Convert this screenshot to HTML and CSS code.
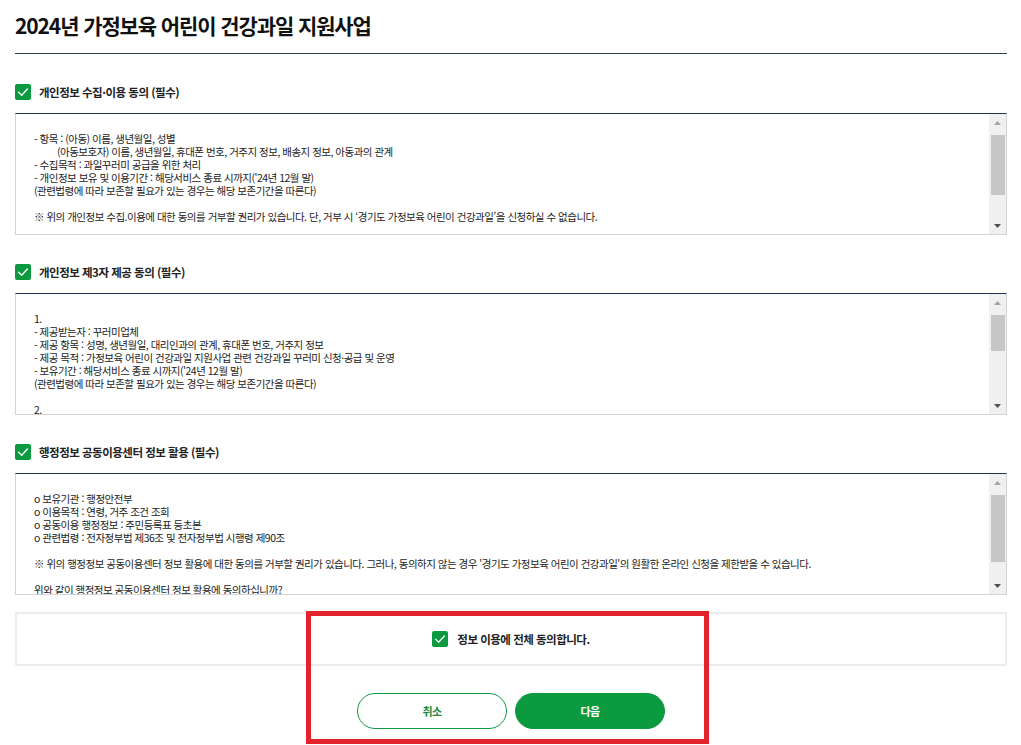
FILE: index.html
```html
<!DOCTYPE html>
<html lang="ko">
<head>
<meta charset="utf-8">
<title>2024년 가정보육 어린이 건강과일 지원사업</title>
<link rel="stylesheet" href="styles.css">
</head>
<body>
<div class="page">
  <h1 class="title">2024년 가정보육 어린이 건강과일 지원사업</h1>

  <section class="agree">
    <div class="agree-head">
      <span class="chk"><svg viewBox="0 0 16 16" width="16" height="16"><path d="M3.6 8.3 L6.7 11.2 L12.4 5.1" fill="none" stroke="#fff" stroke-width="1.4" stroke-linecap="round" stroke-linejoin="round"/></svg></span>
      <span class="agree-label">개인정보 수집·이용 동의 (필수)</span>
    </div>
    <div class="terms">
      <div class="terms-body">
        <p>- 항목 : (아동) 이름, 생년월일, 성별</p>
        <p class="indent">(아동보호자) 이름, 생년월일, 휴대폰 번호, 거주지 정보, 배송지 정보, 아동과의 관계</p>
        <p>- 수집목적 : 과일꾸러미 공급을 위한 처리</p>
        <p>- 개인정보 보유 및 이용기간 : 해당서비스 종료 시까지('24년 12월 말)</p>
        <p>(관련법령에 따라 보존할 필요가 있는 경우는 해당 보존기간을 따른다)</p>
        <p></p>
        <p>※ 위의 개인정보 수집.이용에 대한 동의를 거부할 권리가 있습니다. 단, 거부 시 ‘경기도 가정보육 어린이 건강과일’을 신청하실 수 없습니다.</p>
        <p></p>
        <p></p>
      </div>
      <div class="sbar">
        <span class="sb-btn"><svg width="7" height="4" viewBox="0 0 7 4"><polygon points="0,4 3.5,0 7,4" fill="#a3a3a3"/></svg></span>
        <span class="sb-track"><span class="sb-thumb thumb-1"></span></span>
        <span class="sb-btn"><svg width="7" height="4" viewBox="0 0 7 4"><polygon points="0,0 7,0 3.5,4" fill="#505050"/></svg></span>
      </div>
    </div>
  </section>

  <section class="agree">
    <div class="agree-head">
      <span class="chk"><svg viewBox="0 0 16 16" width="16" height="16"><path d="M3.6 8.3 L6.7 11.2 L12.4 5.1" fill="none" stroke="#fff" stroke-width="1.4" stroke-linecap="round" stroke-linejoin="round"/></svg></span>
      <span class="agree-label">개인정보 제3자 제공 동의 (필수)</span>
    </div>
    <div class="terms">
      <div class="terms-body">
        <p>1.</p>
        <p>- 제공받는자 : 꾸러미업체</p>
        <p>- 제공 항목 : 성명, 생년월일, 대리인과의 관계, 휴대폰 번호, 거주지 정보</p>
        <p>- 제공 목적 : 가정보육 어린이 건강과일 지원사업 관련 건강과일 꾸러미 신청·공급 및 운영</p>
        <p>- 보유기간 : 해당서비스 종료 시까지('24년 12월 말)</p>
        <p>(관련법령에 따라 보존할 필요가 있는 경우는 해당 보존기간을 따른다)</p>
        <p></p>
        <p>2.</p>
      </div>
      <div class="sbar">
        <span class="sb-btn"><svg width="7" height="4" viewBox="0 0 7 4"><polygon points="0,4 3.5,0 7,4" fill="#a3a3a3"/></svg></span>
        <span class="sb-track"><span class="sb-thumb thumb-2"></span></span>
        <span class="sb-btn"><svg width="7" height="4" viewBox="0 0 7 4"><polygon points="0,0 7,0 3.5,4" fill="#505050"/></svg></span>
      </div>
    </div>
  </section>

  <section class="agree">
    <div class="agree-head">
      <span class="chk"><svg viewBox="0 0 16 16" width="16" height="16"><path d="M3.6 8.3 L6.7 11.2 L12.4 5.1" fill="none" stroke="#fff" stroke-width="1.4" stroke-linecap="round" stroke-linejoin="round"/></svg></span>
      <span class="agree-label">행정정보 공동이용센터 정보 활용 (필수)</span>
    </div>
    <div class="terms">
      <div class="terms-body">
        <p>o 보유기관 : 행정안전부</p>
        <p>o 이용목적 : 연령, 거주 조건 조회</p>
        <p>o 공동이용 행정정보 : 주민등록표 등초본</p>
        <p>o 관련법령 : 전자정부법 제36조 및 전자정부법 시행령 제90조</p>
        <p></p>
        <p>※ 위의 행정정보 공동이용센터 정보 활용에 대한 동의를 거부할 권리가 있습니다. 그러나, 동의하지 않는 경우 '경기도 가정보육 어린이 건강과일'의 원활한 온라인 신청을 제한받을 수 있습니다.</p>
        <p></p>
        <p>위와 같이 행정정보 공동이용센터 정보 활용에 동의하십니까?</p>
      </div>
      <div class="sbar">
        <span class="sb-btn"><svg width="7" height="4" viewBox="0 0 7 4"><polygon points="0,4 3.5,0 7,4" fill="#a3a3a3"/></svg></span>
        <span class="sb-track"><span class="sb-thumb thumb-3"></span></span>
        <span class="sb-btn"><svg width="7" height="4" viewBox="0 0 7 4"><polygon points="0,0 7,0 3.5,4" fill="#505050"/></svg></span>
      </div>
    </div>
  </section>

  <div class="all-agree">
    <span class="chk"><svg viewBox="0 0 16 16" width="16" height="16"><path d="M3.6 8.3 L6.7 11.2 L12.4 5.1" fill="none" stroke="#fff" stroke-width="1.4" stroke-linecap="round" stroke-linejoin="round"/></svg></span>
    <span class="all-label">정보 이용에 전체 동의합니다.</span>
  </div>

  <div class="btns">
    <button class="btn btn-cancel" type="button">취소</button>
    <button class="btn btn-next" type="button">다음</button>
  </div>

  <div class="highlight"></div>
</div>
</body>
</html>
```

FILE: styles.css
```css
* { box-sizing: border-box; }

html, body {
  margin: 0;
  padding: 0;
  background: #fff;
}

body {
  font-family: "Noto Sans CJK KR", "Noto Sans", sans-serif;
  color: #333;
}

.page {
  position: relative;
  display: flex;
  flex-direction: column;
  padding: 0 14px 16px 15px;
}

.title {
  margin: 0;
  padding: 10px 0 13px;
  font-size: 21px;
  line-height: 30px;
  font-weight: 700;
  letter-spacing: -1.1px;
  color: #111;
  border-bottom: 1px solid #2c3e50;
}

.agree {
  display: flex;
  flex-direction: column;
  gap: 13px;
  margin-top: 30px;
}

.agree + .agree {
  margin-top: 29px;
}

.agree-head {
  display: flex;
  align-items: center;
  gap: 8px;
  height: 16px;
}

.chk {
  width: 16px;
  height: 16px;
  flex: none;
  border-radius: 2px;
  background: #0b9a40;
  display: flex;
  align-items: center;
  justify-content: center;
}

.agree-label {
  font-size: 11.5px;
  line-height: 16px;
  font-weight: 700;
  letter-spacing: -0.5px;
  color: #222;
}

.terms {
  display: flex;
  height: 122px;
  border: 1px solid #d3d3d3;
  border-top-color: #1e3550;
}

.terms-body {
  flex: 1;
  overflow: hidden;
  padding: 18px 18px 0;
  font-size: 10.5px;
  line-height: 13px;
  letter-spacing: -0.5px;
  color: #222;
}

.terms-body p {
  margin: 0;
  height: 13px;
  white-space: nowrap;
}

.terms-body .indent {
  padding-left: 23px;
}

.sbar {
  width: 17px;
  flex: none;
  display: flex;
  flex-direction: column;
  background: #f0f0f0;
}

.sb-btn {
  height: 17px;
  flex: none;
  display: flex;
  align-items: center;
  justify-content: center;
}

.sb-track {
  flex: 1;
  display: flex;
  flex-direction: column;
  padding: 4px 1px 0 2px;
}

.sb-thumb {
  display: block;
  background: #c6c6c6;
}

.thumb-1 { height: 60px; }
.thumb-2 { height: 36px; }
.thumb-3 { height: 67px; }

.all-agree {
  margin-top: 17px;
  height: 54px;
  border: 2px solid #ececec;
  display: flex;
  align-items: center;
  justify-content: center;
  gap: 9px;
}

.all-label {
  font-size: 11.5px;
  line-height: 16px;
  font-weight: 700;
  letter-spacing: -0.5px;
  color: #222;
}

.btns {
  margin-top: 27px;
  display: flex;
  justify-content: center;
  gap: 8px;
}

.btn {
  width: 150px;
  height: 36px;
  border-radius: 18px;
  border: 1px solid #0b9a40;
  font-family: "Noto Sans CJK KR", "Noto Sans", sans-serif;
  font-size: 11px;
  font-weight: 700;
  letter-spacing: -0.5px;
  padding: 0;
  cursor: pointer;
}

.btn-cancel {
  background: #fff;
  color: #1f8a3c;
}

.btn-next {
  background: #0b9a40;
  color: #fff;
}

.highlight {
  position: absolute;
  left: 306px;
  top: 611px;
  width: 403px;
  height: 133px;
  border: 5px solid #e3222b;
  pointer-events: none;
}
```
